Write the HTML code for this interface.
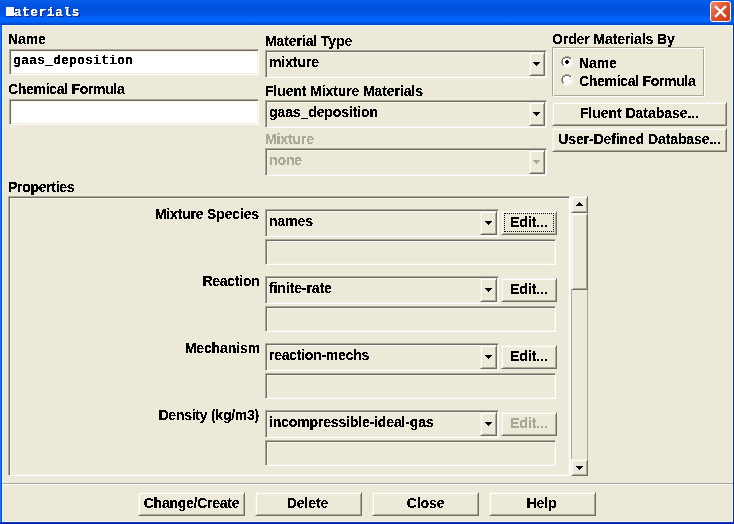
<!DOCTYPE html>
<html><head><meta charset="utf-8">
<style>
*{margin:0;padding:0;box-sizing:border-box}
html,body{width:734px;height:524px;overflow:hidden;background:#0A48D8}
body{position:relative;font-family:"Liberation Sans",sans-serif;font-weight:bold;color:#000}
.a{position:absolute}
.t{position:absolute;white-space:nowrap;line-height:15px;letter-spacing:-0.1px;font-size:14px;filter:url(#th)}
.sk{position:absolute;border:1px solid;border-color:#ACA899 #fff #fff #ACA899;box-shadow:inset 1px 1px 0 #716F64,inset -1px -1px 0 #F1EFE2,inset 2px 2px 0 #F6F4EE}
.rs{position:absolute;border:1px solid;border-color:#F1EFE2 #716F64 #716F64 #F1EFE2;box-shadow:inset 1px 1px 0 #fff,inset -1px -1px 0 #ACA899;background:#ECE9D8}
.gr{position:absolute;border:1px solid;border-color:#ACA899 #fff #fff #ACA899;box-shadow:inset 1px 1px 0 #fff,inset -1px -1px 0 #ACA899}
.mono{font-family:"Liberation Mono",monospace;letter-spacing:0;font-size:13.33px}
.dis{color:#ACA899}
</style></head><body>

<svg width="0" height="0" style="position:absolute"><filter id="th" x="0" y="0" width="100%" height="100%" color-interpolation-filters="sRGB"><feComponentTransfer><feFuncA type="discrete" tableValues="0 0 1 1 1"/></feComponentTransfer></filter><filter id="th2" x="0" y="0" width="100%" height="100%" color-interpolation-filters="sRGB"><feComponentTransfer><feFuncA type="discrete" tableValues="0 1 1 1 1"/></feComponentTransfer></filter></svg>
<div class="a" style="left:0;top:0;width:734px;height:25px;background:linear-gradient(#0A5FE8 0px,#0058E6 3px,#0050DC 10px,#0056E8 15px,#0066FF 19px,#0062F8 22px,#0046C8 24px)"></div>
<div class="a" style="left:6px;top:7px;width:8px;height:9px;background:#fff;box-shadow:1px 1px 0 #0A2A90"></div>
<div class="t" style="left:14px;top:6px;color:#fff;font-family:'Liberation Mono',monospace;font-size:12.5px;letter-spacing:0.75px;text-shadow:1px 1px 0 #0A2A90;filter:url(#th2)">aterials</div>
<div class="a" style="left:710px;top:1px;width:21px;height:21px;border:1px solid #fff;border-radius:3px;background:linear-gradient(135deg,#F08A6A,#E0502A 50%,#C83A18)"></div>
<svg class="a" style="left:710px;top:1px" width="21" height="21"><path d="M6 6 L15 15 M15 6 L6 15" stroke="#fff" stroke-width="2.4" stroke-linecap="square"/></svg>
<div class="a" style="left:0;top:25px;width:1px;height:497px;background:#2070FF"></div>
<div class="a" style="left:1px;top:25px;width:1px;height:497px;background:#0850D8"></div>
<div class="a" style="left:733px;top:25px;width:1px;height:497px;background:#10308C"></div>
<div class="a" style="left:0;top:522px;width:734px;height:1px;background:#1838B8"></div>
<div class="a" style="left:0;top:523px;width:734px;height:1px;background:#0018C0"></div>
<div class="a" style="left:2px;top:25px;width:731px;height:497px;background:#ECE9D8;border:1px solid #EAF4FF"></div>
<div class="t " style="left:8px;top:32px;">Name</div>
<div class="sk" style="left:9px;top:49px;width:250px;height:26px;background:#fff"></div>
<div class="t mono" style="left:13px;top:53px;">gaas_deposition</div>
<div class="t " style="left:8px;top:82px;letter-spacing:-0.3px">Chemical Formula</div>
<div class="sk" style="left:9px;top:99px;width:250px;height:26px;background:#fff"></div>
<div class="t " style="left:265px;top:34px;">Material Type</div>
<div class="sk" style="left:265px;top:50px;width:282px;height:28px;background:#ECE9D8"></div>
<div class="t " style="left:269px;top:55px;">mixture</div>
<div class="rs" style="left:529px;top:52px;width:16px;height:24px"></div>
<svg class="a" style="left:533px;top:62px" width="7" height="4"><path d="M0 0h7v1h-1v1h-1v1h-1v1h-1v-1h-1v-1h-1v-1h-1z" fill="#000"/></svg>
<div class="t " style="left:265px;top:84px;">Fluent Mixture Materials</div>
<div class="sk" style="left:265px;top:100px;width:282px;height:28px;background:#ECE9D8"></div>
<div class="t " style="left:269px;top:105px;">gaas_deposition</div>
<div class="rs" style="left:529px;top:102px;width:16px;height:24px"></div>
<svg class="a" style="left:533px;top:112px" width="7" height="4"><path d="M0 0h7v1h-1v1h-1v1h-1v1h-1v-1h-1v-1h-1v-1h-1z" fill="#000"/></svg>
<div class="t dis" style="left:265px;top:132px;">Mixture</div>
<div class="sk" style="left:265px;top:148px;width:282px;height:28px;background:#ECE9D8"></div>
<div class="t dis" style="left:269px;top:153px;">none</div>
<div class="rs" style="left:529px;top:150px;width:16px;height:24px"></div>
<svg class="a" style="left:533px;top:160px" width="7" height="4"><path d="M0 0h7v1h-1v1h-1v1h-1v1h-1v-1h-1v-1h-1v-1h-1z" fill="#ACA899"/></svg>
<div class="t " style="left:552px;top:32px;">Order Materials By</div>
<div class="gr" style="left:552px;top:47px;width:153px;height:50px"></div>
<svg class="a" style="left:561px;top:56px" width="12" height="12" shape-rendering="crispEdges">
<path d="M4 0h4v1h-4zM2 1h2v1h-2zM8 1h2v1h-2zM1 2h1v2h-1zM0 4h1v4h-1zM1 8h1v2h-1z" fill="#ACA899"/>
<path d="M4 1h4v1h-4zM2 2h2v1h-2zM8 2h2v1h-2zM2 3h-1v1h1zM1 4h1v4h-1zM2 8h1v1h-1z" fill="#716F64"/>
<path d="M10 2h1v2h-1zM11 4h1v4h-1zM10 8h1v2h-1zM8 10h2v1h-2zM4 11h4v1h-4zM2 10h2v1h-2z" fill="#fff"/>
<path d="M9 3h1v1h-1zM10 4h1v4h-1zM9 8h1v1h-1zM8 9h1v1h-1zM4 10h4v1h-4zM3 9h1v1h-1z" fill="#F1EFE2"/>
<path d="M4 2h4v1h1v1h1v4h-1v1h-1v1h-4v-1h-1v-1h-1v-4h1v-1h1z" fill="#fff"/>
<rect x="5" y="4" width="2" height="4" fill="#000"/><rect x="4" y="5" width="4" height="2" fill="#000"/></svg>
<div class="t " style="left:579px;top:56px;">Name</div>
<svg class="a" style="left:561px;top:74px" width="12" height="12" shape-rendering="crispEdges">
<path d="M4 0h4v1h-4zM2 1h2v1h-2zM8 1h2v1h-2zM1 2h1v2h-1zM0 4h1v4h-1zM1 8h1v2h-1z" fill="#ACA899"/>
<path d="M4 1h4v1h-4zM2 2h2v1h-2zM8 2h2v1h-2zM2 3h-1v1h1zM1 4h1v4h-1zM2 8h1v1h-1z" fill="#716F64"/>
<path d="M10 2h1v2h-1zM11 4h1v4h-1zM10 8h1v2h-1zM8 10h2v1h-2zM4 11h4v1h-4zM2 10h2v1h-2z" fill="#fff"/>
<path d="M9 3h1v1h-1zM10 4h1v4h-1zM9 8h1v1h-1zM8 9h1v1h-1zM4 10h4v1h-4zM3 9h1v1h-1z" fill="#F1EFE2"/>
<path d="M4 2h4v1h1v1h1v4h-1v1h-1v1h-4v-1h-1v-1h-1v-4h1v-1h1z" fill="#fff"/>
</svg>
<div class="t " style="left:579px;top:74px;letter-spacing:-0.3px">Chemical Formula</div>
<div class="rs" style="left:552px;top:102px;width:175px;height:24px"></div>
<div class="t " style="left:552px;top:106px;width:175px;text-align:center;letter-spacing:-0.05px">Fluent Database...</div>
<div class="rs" style="left:552px;top:128px;width:175px;height:24px"></div>
<div class="t " style="left:552px;top:132px;width:175px;text-align:center">User-Defined Database...</div>
<div class="t " style="left:8px;top:180px;letter-spacing:-0.3px">Properties</div>
<div class="sk" style="left:8px;top:196px;width:562px;height:280px;background:#ECE9D8"></div>
<div class="a" style="left:570px;top:196px;width:1px;height:280px;background:#FAF9F4"></div>
<div class="rs" style="left:571px;top:196px;width:17px;height:17px"></div>
<svg class="a" style="left:576px;top:202px" width="7" height="4"><path d="M3 0h1v1h1v1h1v1h1v1h-7v-1h1v-1h1v-1h1z" fill="#000"/></svg>
<div class="rs" style="left:571px;top:213px;width:17px;height:77px"></div>
<div class="a" style="left:571px;top:290px;width:1px;height:169px;background:#ACA899"></div>
<div class="a" style="left:587px;top:290px;width:1px;height:169px;background:#ACA899"></div>
<div class="rs" style="left:571px;top:459px;width:17px;height:17px"></div>
<svg class="a" style="left:576px;top:466px" width="7" height="4"><path d="M0 0h7v1h-1v1h-1v1h-1v1h-1v-1h-1v-1h-1v-1h-1z" fill="#000"/></svg>
<div class="t " style="left:0px;top:207px;width:259px;text-align:right;letter-spacing:-0.15px">Mixture Species</div>
<div class="sk" style="left:265px;top:209px;width:234px;height:28px;background:#ECE9D8"></div>
<div class="t " style="left:269px;top:214px;">names</div>
<div class="rs" style="left:480px;top:211px;width:17px;height:24px"></div>
<svg class="a" style="left:485px;top:221px" width="7" height="4"><path d="M0 0h7v1h-1v1h-1v1h-1v1h-1v-1h-1v-1h-1v-1h-1z" fill="#000"/></svg>
<div class="rs" style="left:501px;top:211px;width:56px;height:24px"></div>
<div class="a" style="left:504px;top:213px;width:50px;height:19px;border:1px dotted #000"></div>
<div class="t " style="left:501px;top:215px;width:56px;text-align:center">Edit...</div>
<div class="sk" style="left:265px;top:239px;width:291px;height:26px;background:#ECE9D8"></div>
<div class="t " style="left:0px;top:274px;width:259.5px;text-align:right;letter-spacing:-0.25px">Reaction</div>
<div class="sk" style="left:265px;top:276px;width:234px;height:28px;background:#ECE9D8"></div>
<div class="t " style="left:269px;top:281px;">finite-rate</div>
<div class="rs" style="left:480px;top:278px;width:17px;height:24px"></div>
<svg class="a" style="left:485px;top:288px" width="7" height="4"><path d="M0 0h7v1h-1v1h-1v1h-1v1h-1v-1h-1v-1h-1v-1h-1z" fill="#000"/></svg>
<div class="rs" style="left:501px;top:278px;width:56px;height:24px"></div>
<div class="t " style="left:501px;top:282px;width:56px;text-align:center">Edit...</div>
<div class="sk" style="left:265px;top:306px;width:291px;height:26px;background:#ECE9D8"></div>
<div class="t " style="left:0px;top:341px;width:260px;text-align:right;letter-spacing:-0.1px">Mechanism</div>
<div class="sk" style="left:265px;top:343px;width:234px;height:28px;background:#ECE9D8"></div>
<div class="t " style="left:269px;top:348px;letter-spacing:-0.25px">reaction-mechs</div>
<div class="rs" style="left:480px;top:345px;width:17px;height:24px"></div>
<svg class="a" style="left:485px;top:355px" width="7" height="4"><path d="M0 0h7v1h-1v1h-1v1h-1v1h-1v-1h-1v-1h-1v-1h-1z" fill="#000"/></svg>
<div class="rs" style="left:501px;top:345px;width:56px;height:24px"></div>
<div class="t " style="left:501px;top:349px;width:56px;text-align:center">Edit...</div>
<div class="sk" style="left:265px;top:373px;width:291px;height:26px;background:#ECE9D8"></div>
<div class="t " style="left:0px;top:408px;width:259px;text-align:right;letter-spacing:-0.25px">Density (kg/m3)</div>
<div class="sk" style="left:265px;top:410px;width:234px;height:28px;background:#ECE9D8"></div>
<div class="t " style="left:269px;top:415px;letter-spacing:-0.15px">incompressible-ideal-gas</div>
<div class="rs" style="left:480px;top:412px;width:17px;height:24px"></div>
<svg class="a" style="left:485px;top:422px" width="7" height="4"><path d="M0 0h7v1h-1v1h-1v1h-1v1h-1v-1h-1v-1h-1v-1h-1z" fill="#000"/></svg>
<div class="rs" style="left:501px;top:412px;width:56px;height:24px"></div>
<div class="t dis" style="left:501px;top:416px;width:56px;text-align:center">Edit...</div>
<div class="sk" style="left:265px;top:440px;width:291px;height:26px;background:#ECE9D8"></div>
<div class="a" style="left:2px;top:483px;width:731px;height:1px;background:#ACA899"></div>
<div class="a" style="left:2px;top:484px;width:731px;height:1px;background:#fff"></div>
<div class="rs" style="left:138px;top:492px;width:107px;height:24px"></div>
<div class="t " style="left:138px;top:496px;width:107px;text-align:center;letter-spacing:-0.25px">Change/Create</div>
<div class="rs" style="left:255px;top:492px;width:107px;height:24px"></div>
<div class="t " style="left:255px;top:496px;width:107px;text-align:center;margin-left:-1px">Delete</div>
<div class="rs" style="left:372px;top:492px;width:107px;height:24px"></div>
<div class="t " style="left:372px;top:496px;width:107px;text-align:center">Close</div>
<div class="rs" style="left:489px;top:492px;width:107px;height:24px"></div>
<div class="t " style="left:489px;top:496px;width:107px;text-align:center;margin-left:-1px">Help</div>
</body></html>
